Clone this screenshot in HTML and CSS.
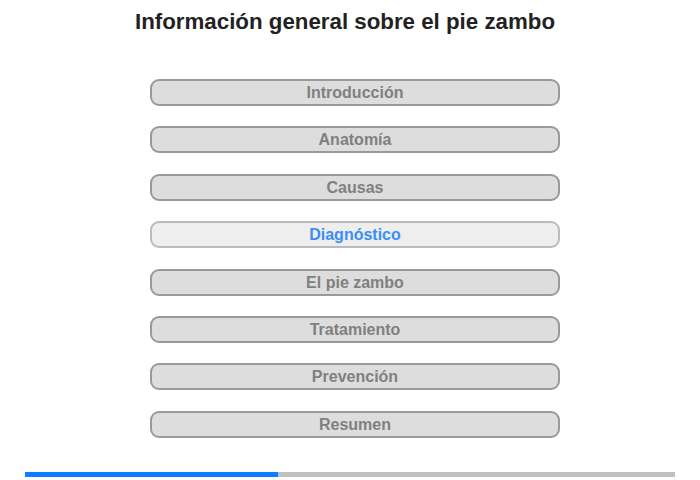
FILE: index.html
```html
<!DOCTYPE html>
<html lang="es">
<head>
<meta charset="utf-8">
<title>Información general sobre el pie zambo</title>
<link rel="stylesheet" href="styles.css">
</head>
<body>
<div class="page">
  <h1 class="title">Información general sobre el pie zambo</h1>
  <nav class="menu">
    <div class="item">Introducción</div>
    <div class="item">Anatomía</div>
    <div class="item">Causas</div>
    <div class="item active">Diagnóstico</div>
    <div class="item">El pie zambo</div>
    <div class="item">Tratamiento</div>
    <div class="item">Prevención</div>
    <div class="item">Resumen</div>
  </nav>
  <div class="progress"><div class="fill" style="width:38.9%"></div></div>
</div>
</body>
</html>
```
FILE: styles.css
```css
html, body {
  margin: 0;
  padding: 0;
  background: #fff;
}
.page {
  width: 700px;
  height: 480px;
  font-family: "Liberation Sans", Arial, sans-serif;
  display: flex;
  flex-direction: column;
}
.title {
  margin: 9px 0 0 0;
  padding-right: 10px;
  font-size: 22.3px;
  line-height: 26px;
  font-weight: bold;
  color: #222;
  text-align: center;
}
.menu {
  display: flex;
  flex-direction: column;
  gap: 20.4px;
  margin: 44px 0 0 150px;
  width: 410px;
}
.item {
  box-sizing: border-box;
  height: 27px;
  border: 2px solid #999;
  border-radius: 9px;
  background: #ddd;
  color: #808080;
  font-size: 16px;
  font-weight: bold;
  line-height: 23px;
  text-align: center;
}
.item.active {
  background: #eee;
  border-color: #bbb;
  color: #3a8ef5;
}
.progress {
  margin: 34px 0 0 25px;
  width: 650px;
  height: 5px;
  background: #c0c0c0;
}
.fill {
  height: 100%;
  background: #0a7fff;
}
```
